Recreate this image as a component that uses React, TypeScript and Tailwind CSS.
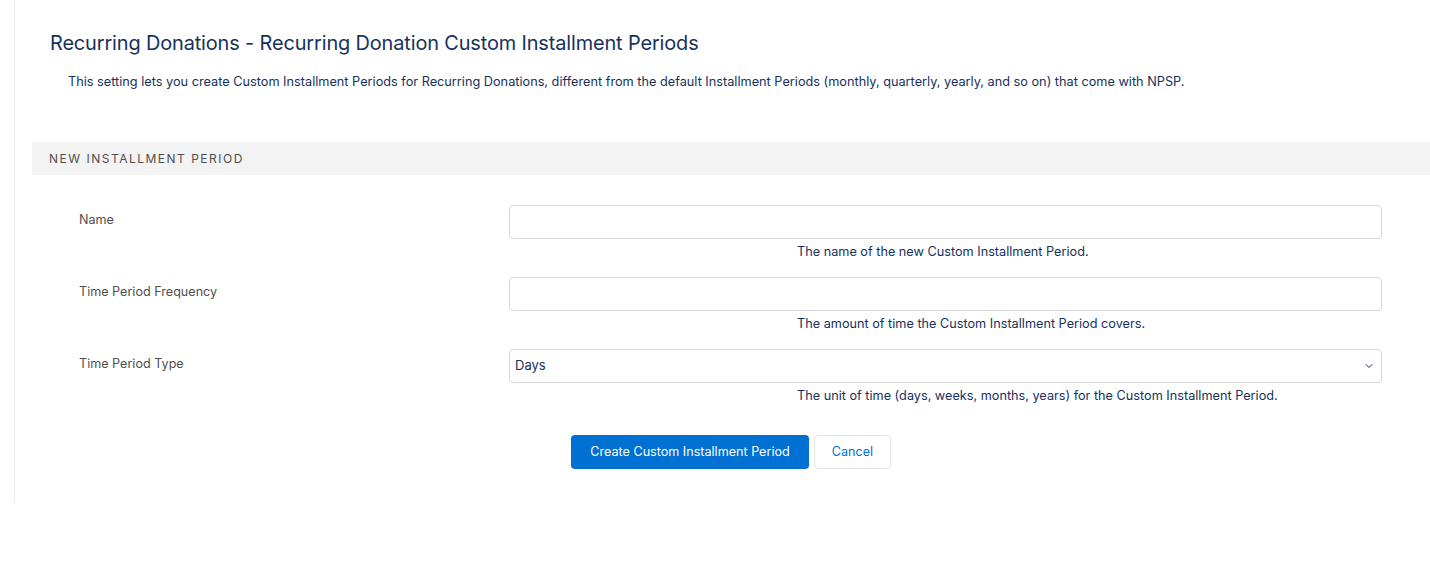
import { ChevronDown } from 'lucide-react'

const fields = [
  { label: 'Name', help: 'The name of the new Custom Installment Period.', type: 'text' },
  { label: 'Time Period Frequency', help: 'The amount of time the Custom Installment Period covers.', type: 'text' },
  {
    label: 'Time Period Type',
    help: 'The unit of time (days, weeks, months, years) for the Custom Installment Period.',
    type: 'select',
  },
]

export default function App() {
  return (
    <div className="w-full h-[562px] bg-white text-[#16325c]" style={{ fontFamily: 'Inter, "Liberation Sans", sans-serif' }}>
      <div className="ml-[14px] h-[502px] border-l border-[#ebebeb] pl-[17px] pt-[31px]">
        {/* Header */}
        <h1 className="pl-[18px] text-[19.9px] leading-[24px] font-normal tracking-[-0.12px]">
          Recurring Donations - Recurring Donation Custom Installment Periods
        </h1>
        <p className="mt-[18px] pl-[36px] text-[12.73px] leading-[18px]">
          This setting lets you create Custom Installment Periods for Recurring Donations, different from the default
          Installment Periods (monthly, quarterly, yearly, and so on) that come with NPSP.
        </p>

        {/* Section */}
        <div className="mt-[51px] h-[33px] bg-[#f3f3f3] flex items-center pl-[17px]">
          <span className="text-[12px] tracking-[1.5px] text-[#514f4d] uppercase">New Installment Period</span>
        </div>

        <div className="pt-[30px] pr-[48px] flex flex-col gap-[16px]">
          {fields.map((f) => (
            <div key={f.label} className="flex">
              <div className="w-[477px] shrink-0 pl-[47px] pt-[6px] text-[12.6px] leading-[18px] text-[#514f4d]">
                {f.label}
              </div>
              <div className="flex-1">
                {f.type === 'select' ? (
                  <div className="h-[34px] border border-[#d8d8d8] rounded-[4px] flex items-center justify-between pl-[5px] pr-[6px]">
                    <span className="text-[13px]">Days</span>
                    <ChevronDown className="w-[12px] h-[12px] text-[#16325c]" strokeWidth={2} />
                  </div>
                ) : (
                  <div className="h-[34px] border border-[#d8d8d8] rounded-[4px]" />
                )}
                <div className="mt-[4px] pl-[288px] text-[12.7px] leading-[18px]">{f.help}</div>
              </div>
            </div>
          ))}
        </div>

        <div className="mt-[30px] flex justify-center gap-[5px]">
          <button className="h-[34px] w-[238px] rounded-[4px] bg-[#0070d2] text-white text-[12.6px]">
            Create Custom Installment Period
          </button>
          <button className="h-[34px] w-[77px] rounded-[4px] border border-[#e5e5e5] bg-white text-[#0070d2] text-[12.6px]">
            Cancel
          </button>
        </div>
      </div>
    </div>
  )
}
